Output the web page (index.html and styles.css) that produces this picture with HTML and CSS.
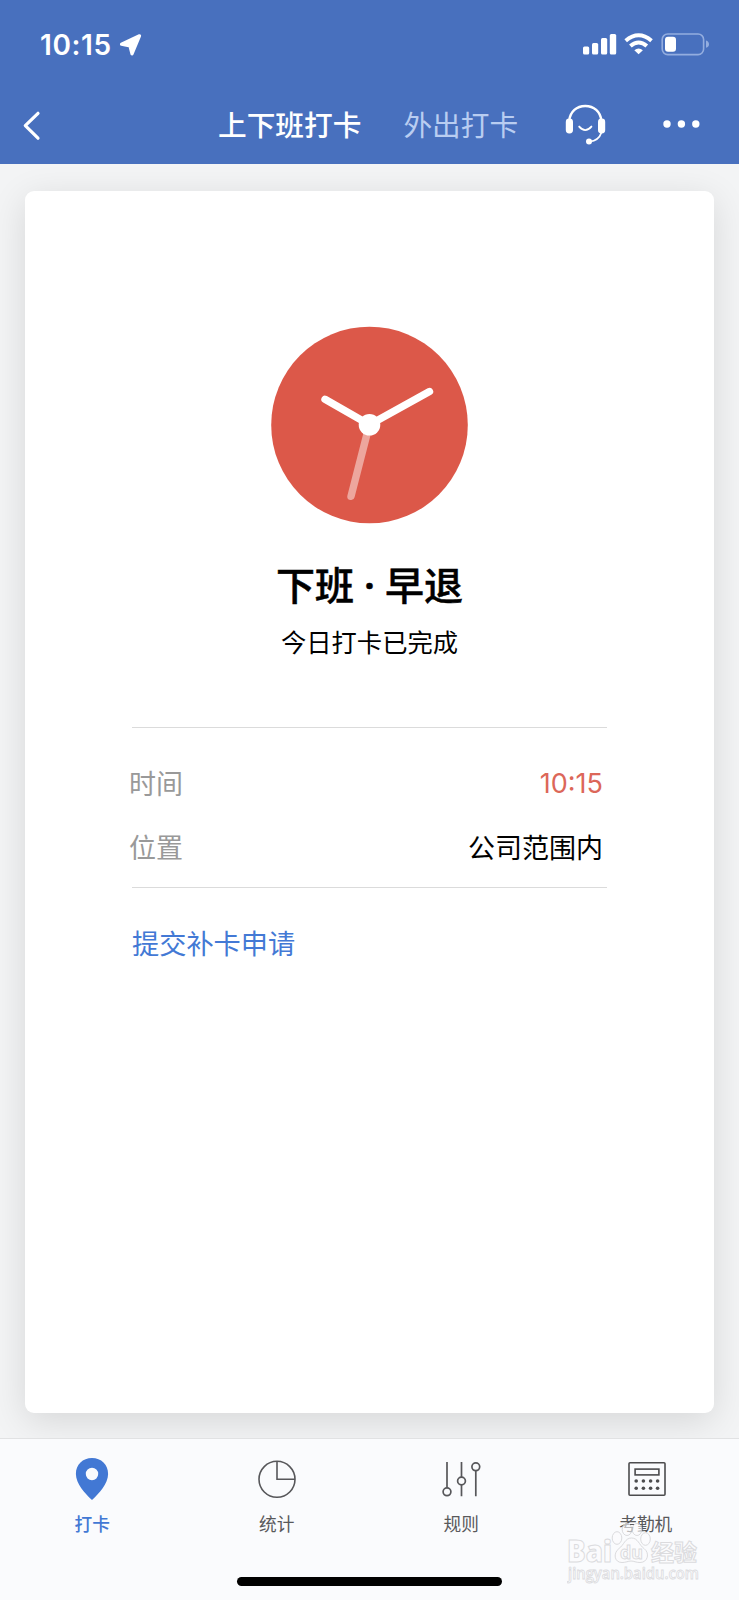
FILE: index.html
```html
<!DOCTYPE html>
<html lang="zh-CN">
<head>
<meta charset="utf-8">
<title>打卡</title>
<link rel="stylesheet" href="styles.css">
</head>
<body>
<div class="screen">
  <header class="header">
    <div class="status">
      <span class="status-time">10:15</span>
      <svg class="location" width="24" height="24" viewBox="0 0 24 24"><path d="M20.5 2.8 L13 20.8 L11 13 L2.500 11.300Z" fill="#fff" stroke="#fff" stroke-width="3.200" stroke-linejoin="round"/></svg>
      <svg class="signals" width="128" height="24" viewBox="0 0 128 24">
        <g fill="#fff">
          <rect x="1" y="13.4" width="6.200" height="8" rx="1.5"/>
          <rect x="10" y="10" width="6.200" height="11.4" rx="1.5"/>
          <rect x="19" y="5" width="6.200" height="16.4" rx="1.5"/>
          <rect x="27.8" y="1" width="6.400" height="20.4" rx="1.5"/>
          <path d="M56.6 21.3 L52.3 17.2 Q56.6 13.6 60.9 17.2Z"/>
        </g>
        <path d="M43.700 7.7 Q56.6 -3.2 69.5 7.7 M48.4 13 Q56.6 6 64.8 13" fill="none" stroke="#fff" stroke-width="4"/>
        <rect x="80.2" y="1" width="41.4" height="20.6" rx="5.5" fill="none" stroke="#93addf" stroke-width="1.6"/>
        <rect x="83" y="3.8" width="11" height="15" rx="3" fill="#fff"/>
        <path d="M124 7.6 Q127 8.6 127 11.2 Q127 13.8 124 14.8Z" fill="#93addf"/>
      </svg>
    </div>
    <nav class="navbar">
      <svg class="back" width="20" height="32" viewBox="0 0 20 32"><path d="M16 3.3 L3.3 15.7 L16 28.2" fill="none" stroke="#fff" stroke-width="3.2" stroke-linecap="round" stroke-linejoin="round"/></svg>
      <span class="nav-tab nav-tab-active">上下班打卡</span>
      <span class="nav-tab">外出打卡</span>
      <svg class="service" width="42" height="42" viewBox="0 0 42 42">
        <g fill="none" stroke="#fff" stroke-width="2.5" stroke-linecap="round">
          <path d="M4.2 18 C5 8.5 11.8 3 20.3 3 C28.8 3 35.6 8.5 36.4 18"/>
          <path d="M36.2 30 C34.5 35.5 30 38 24.5 38.6" stroke-width="1.7"/>
          <path d="M14.2 23.6 Q20.2 30.6 26.4 23.6" stroke-width="1.9"/>
        </g>
        <g fill="#fff"><rect x=".8" y="15.6" width="7.2" height="14.8" rx="3.4"/><rect x="33" y="15.6" width="7.2" height="14.8" rx="3.4"/><circle cx="24" cy="38.5" r="3"/></g>
      </svg>
      <svg class="more" width="38" height="10" viewBox="0 0 38 10"><g fill="#fff"><circle cx="5" cy="5" r="3.7"/><circle cx="19.4" cy="5" r="3.7"/><circle cx="33.8" cy="5" r="3.7"/></g></svg>
    </nav>
  </header>

  <main class="content">
    <section class="card">
      <svg class="clock" width="199" height="198" viewBox="0 0 199 198">
        <circle cx="99.500" cy="99" r="98.3" fill="#dc5849"/>
        <g stroke="#fff" stroke-width="7.4" stroke-linecap="round">
          <path d="M99.3 99 L81 170.3" stroke="#eda69d"/>
          <path d="M55 73.3 L99.500 98.8 L159.500 65.6" fill="none"/>
        </g>
        <circle cx="99.500" cy="98.8" r="10.8" fill="#fff"/>
      </svg>
      <h1 class="title">下班<span class="title-dot">·</span>早退</h1>
      <p class="subtitle">今日打卡已完成</p>
      <div class="details">
        <div class="row"><span class="label">时间</span><span class="value value-time">10:15</span></div>
        <div class="row"><span class="label">位置</span><span class="value">公司范围内</span></div>
      </div>
      <a class="apply">提交补卡申请</a>
    </section>
  </main>

  <footer class="tabbar">
    <div class="tab tab-active">
      <svg class="tab-icon" width="44" height="44" viewBox="0 0 44 44"><path fill-rule="evenodd" fill="#4278d4" d="M22 44 C15 37.5 5.9 27.5 5.9 18 C5.9 8.4 12.8 2 22 2 C31.200 2 38.100 8.400 38.100 18 C38.100 27.500 29 37.500 22 44Z M22 11.800 A6.200 6.200 0 1 0 22 24.200 A6.200 6.200 0 1 0 22 11.800Z"/></svg>
      <span>打卡</span>
    </div>
    <div class="tab">
      <svg class="tab-icon" width="44" height="44" viewBox="0 0 44 44"><g fill="none" stroke="#57575a" stroke-width="1.6"><circle cx="22" cy="23.3" r="18"/><path d="M22 5.300V23.300H40"/></g></svg>
      <span>统计</span>
    </div>
    <div class="tab">
      <svg class="tab-icon" width="44" height="44" viewBox="0 0 44 44"><g fill="none" stroke="#57575a" stroke-width="1.700"><path d="M8 6V31.800M22.500 6V21M22.500 29V40.300M36.800 14.500V40.300"/><circle cx="8" cy="35.800" r="3.900"/><circle cx="22.500" cy="25" r="3.900"/><circle cx="36.800" cy="10.800" r="3.900"/></g></svg>
      <span>规则</span>
    </div>
    <div class="tab">
      <svg class="tab-icon" width="44" height="44" viewBox="0 0 44 44"><g fill="none" stroke="#4c4c4e" stroke-width="1.600"><rect x="5" y="6.700" width="36" height="32.600" rx="1"/><rect x="11.100" y="13.100" width="23.800" height="5.800"/></g><g fill="#4c4c4e"><circle cx="12.200" cy="25" r="1.800"/><circle cx="19.400" cy="25" r="1.800"/><circle cx="26.600" cy="25" r="1.800"/><circle cx="33.600" cy="25" r="1.800"/><circle cx="12.200" cy="32.200" r="1.800"/><circle cx="19.400" cy="32.200" r="1.800"/><circle cx="26.600" cy="32.200" r="1.800"/><circle cx="33.600" cy="32.200" r="1.800"/></g></svg>
      <span>考勤机</span>
    </div>
    <div class="home-indicator"></div>
    <svg class="watermark" width="140" height="62" viewBox="0 0 140 62">
      <g fill="#fcfcfd" stroke="#d6d6d9" stroke-width="1">
        <g fill-opacity=".7"><ellipse cx="50" cy="15" rx="4.800" ry="6.300"/><ellipse cx="60" cy="6.500" rx="4.800" ry="6"/><ellipse cx="70" cy="6.500" rx="4.800" ry="6"/><ellipse cx="78.500" cy="16" rx="4.800" ry="6.300"/></g>
        <path d="M64.500 15 C71 15 72 22 77 25.500 C83 30 81 39.500 73 39.500 C69 39.500 67 38 64 38 C61 38 59 39.500 55 39.500 C47 39.500 46 30 52 25.500 C57 22 58 15 64.500 15Z"/>
        <text x="0" y="38.500" class="wm-main" textLength="45" lengthAdjust="spacingAndGlyphs">Bai</text>
        <text x="53" y="36" class="wm-du" textLength="23" lengthAdjust="spacingAndGlyphs">du</text>
        <text x="84" y="38" class="wm-cn" textLength="46" lengthAdjust="spacingAndGlyphs">经验</text>
        <text x="1" y="56" class="wm-url" textLength="131" lengthAdjust="spacingAndGlyphs">jingyan.baidu.com</text>
      </g>
    </svg>
  </footer>
</div>
</body>
</html>
```
FILE: styles.css
```css
* { box-sizing: border-box; }
body {
  margin: 0;
  font-family: "Noto Sans CJK SC", sans-serif;
  color: #000;
}
.screen {
  width: 739px;
  height: 1600px;
  display: flex;
  flex-direction: column;
  overflow: hidden;
  background: #f3f4f5;
}
svg { display: block; flex: none; }

.header {
  height: 164px;
  flex: none;
  background: #4870be;
  color: #fff;
}
.status {
  height: 88px;
  display: flex;
  align-items: center;
  padding: 1px 29px 0 40px;
}
.status-time {
  width: 79px;
  font: 600 28px/36px Inter, sans-serif;
  letter-spacing: .6px;
}
.signals { margin-left: auto; }
.navbar {
  height: 76px;
  display: flex;
  align-items: center;
  padding: 0 39px 4px 22px;
}
.back { margin-top: 4px; }
.nav-tab {
  font-size: 28.700px;
  line-height: 40px;
  margin-top: -1px;
  white-space: nowrap;
  color: #b9cdf1;
}
.nav-tab-active {
  margin-left: 176px;
  margin-right: 42px;
  font-weight: 500;
  color: #fff;
}
.service { margin-left: 47px; }
.more { margin-left: auto; }

.content {
  height: 1274px;
  flex: none;
  padding: 27px 25px 0;
  background: #f3f4f5;
  overflow: hidden;
}
.card {
  height: 1222px;
  padding-top: 135px;
  display: flex;
  flex-direction: column;
  align-items: center;
  border-radius: 9px;
  background: #fff;
  box-shadow: 0 8px 36px rgba(0, 0, 0, .12);
}
.title {
  margin: 29px 0 0;
  display: flex;
  font-size: 39px;
  line-height: 60px;
  font-weight: 500;
  -webkit-text-stroke: .5px #000;
}
.title-dot {
  width: 31px;
  display: flex;
  justify-content: center;
  padding-top: 2px;
  font-family: Inter, sans-serif;
  font-size: 39px;
  font-weight: 600;
}
.subtitle {
  margin: 8px 0 0;
  font-size: 25.300px;
  line-height: 36px;
}
.details {
  width: 475px;
  height: 161px;
  margin-top: 68px;
  padding: 35px 4px 0 0;
  border-top: 1px solid #dbdbdb;
  border-bottom: 1px solid #dbdbdb;
}
.row {
  height: 64px;
  display: flex;
  justify-content: space-between;
  margin-left: -3px;
  font-size: 27px;
  line-height: 40px;
}
.label { color: #999; }
.value-time {
  padding-top: 1px;
  font-family: Inter, sans-serif;
  color: #dc6759;
}
.apply {
  width: 475px;
  margin-top: 34px;
  font-size: 27.200px;
  line-height: 40px;
  color: #4379d5;
}

.tabbar {
  position: relative;
  height: 162px;
  flex: none;
  display: grid;
  grid-template-columns: repeat(4, 1fr);
  padding: 17px 1px 0 0;
  border-top: 1px solid #e1e2e3;
  background: #fafbfd;
}
.tab {
  display: flex;
  flex-direction: column;
  align-items: center;
  font-size: 17.700px;
  line-height: 26px;
  gap: 10px;
  color: #59595b;
}
.tab-active { color: #4278d4; font-weight: 500; }
.home-indicator {
  position: absolute;
  left: 237px;
  bottom: 14px;
  width: 265px;
  height: 9px;
  border-radius: 5px;
  background: #000;
}
.watermark {
  position: absolute;
  left: 567px;
  top: 84px;
  opacity: .85;
}
.wm-main { font: 800 30px "Open Sans", sans-serif; }
.wm-du { font: 700 18px "Open Sans", sans-serif; }
.wm-cn { font-size: 23px; font-weight: 700; }
.wm-url { font: 600 15.500px "Open Sans", sans-serif; stroke-width: .8px; }
```
